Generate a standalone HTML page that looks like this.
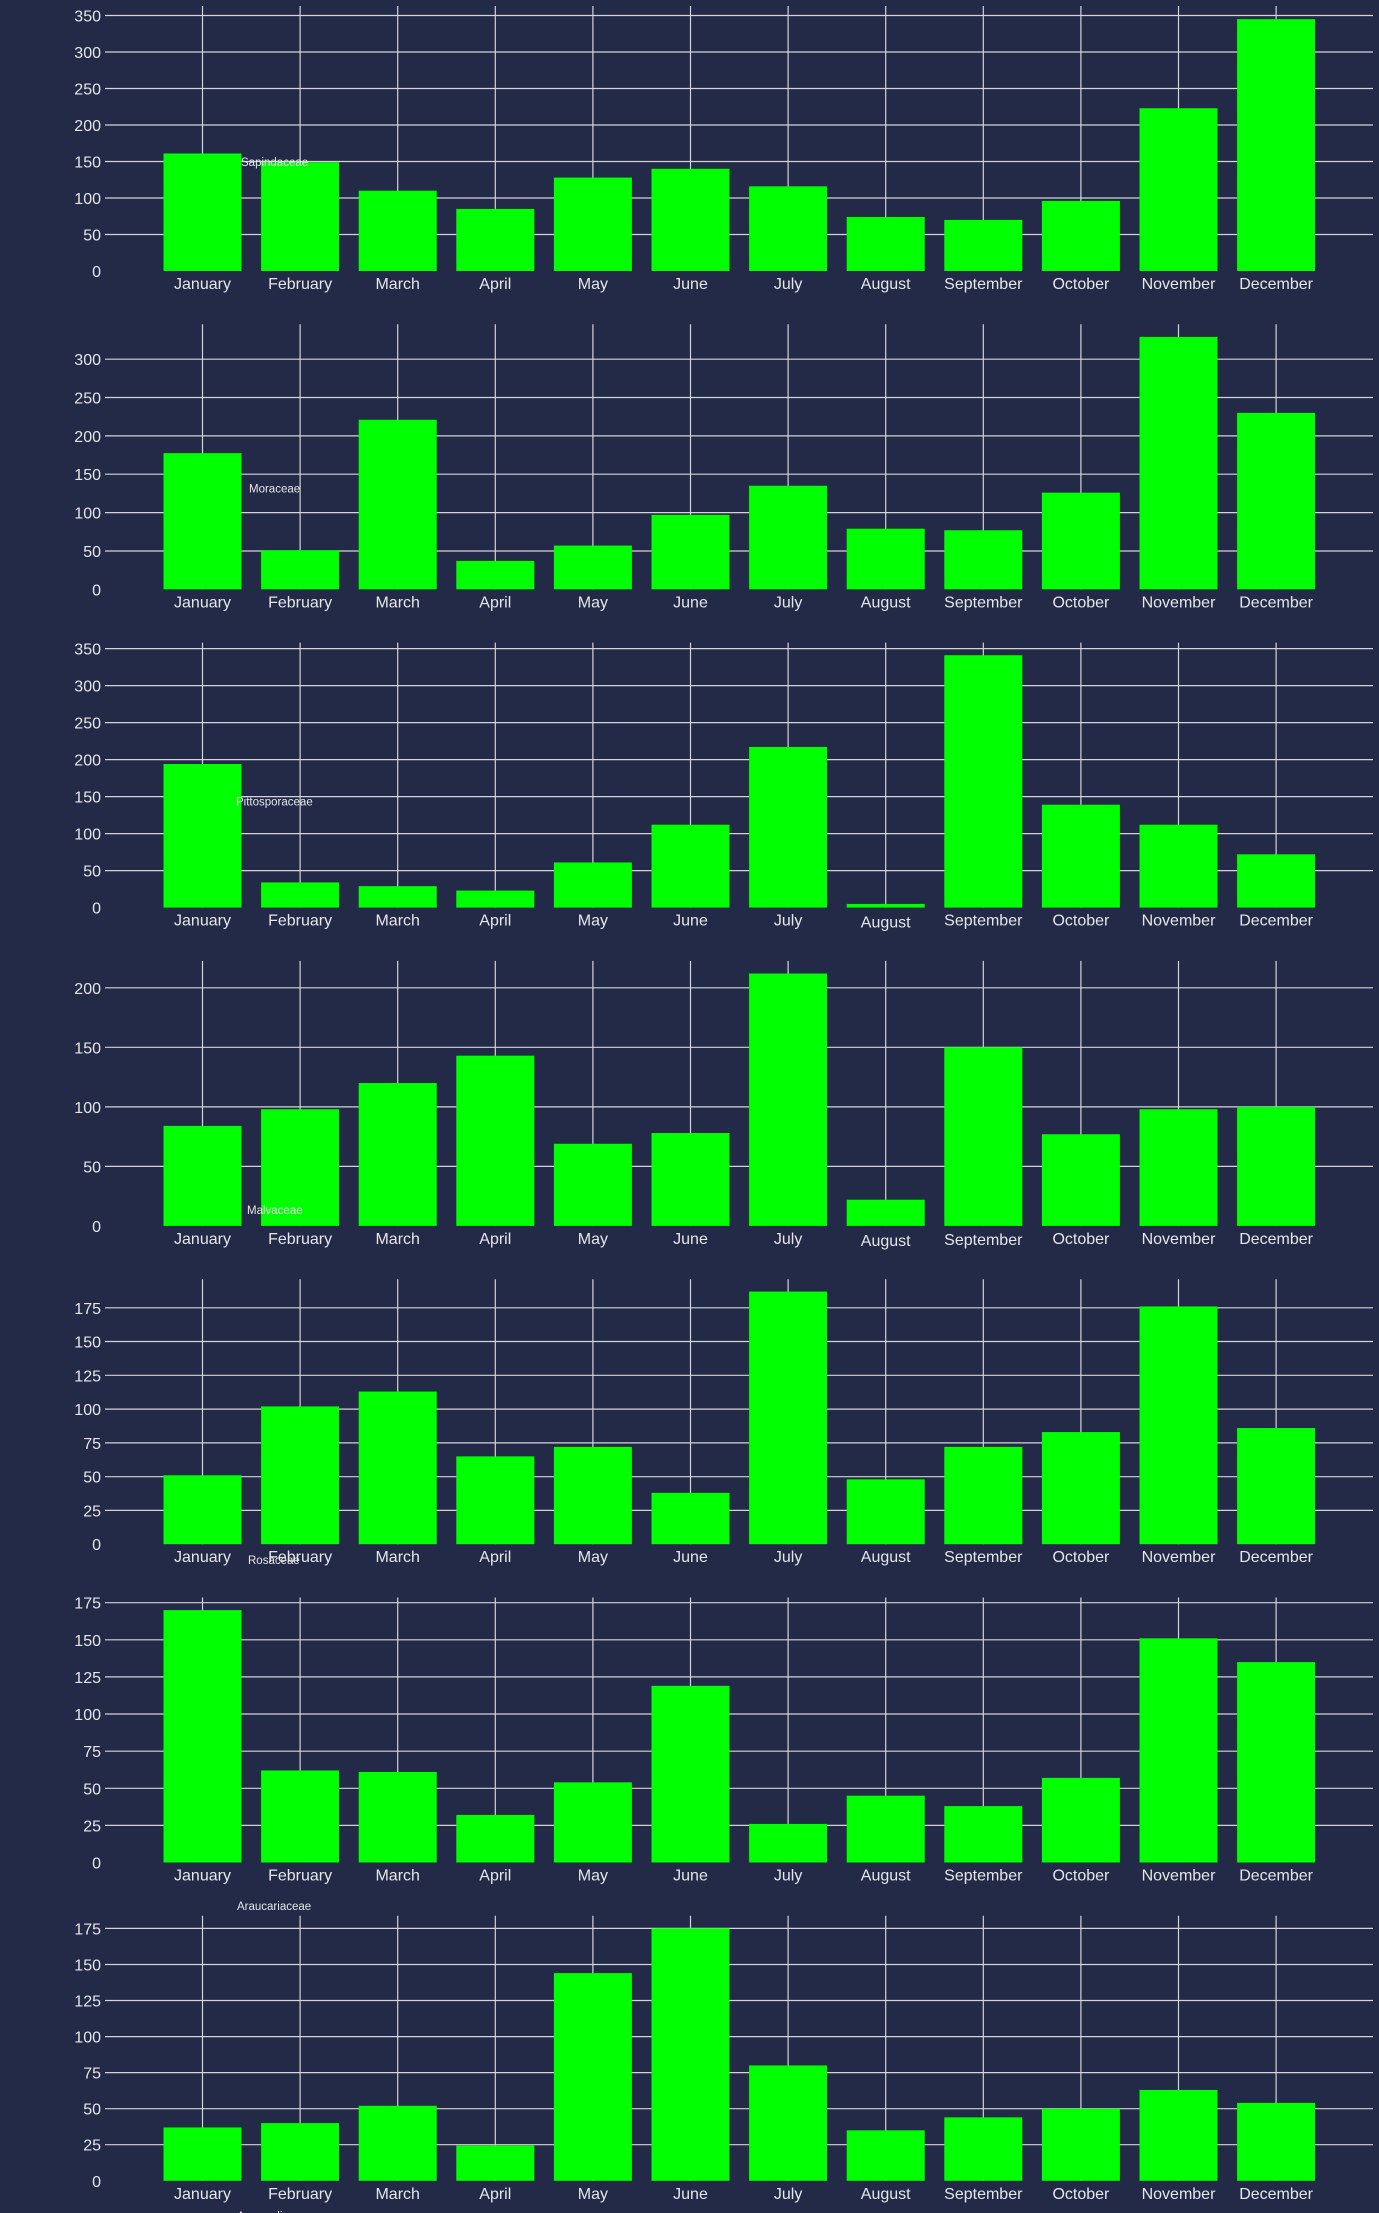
<!DOCTYPE html>
<html><head><meta charset="utf-8"><style>
html,body{margin:0;padding:0;background:#222a48;}
svg{display:block}
text{font-family:"Liberation Sans",sans-serif;fill:#e6e6e6}
.t{font-size:16px;text-anchor:end}
.m{font-size:16px;text-anchor:middle}
.l{font-size:11.5px}
.g line{stroke:#d4d4d4;stroke-width:1.2}
rect{fill:#00ff00}
</style></head><body>
<svg width="1379" height="2213" viewBox="0 0 1379 2213">
<rect x="0" y="0" width="1379" height="2213" style="fill:#222a48"/>
<defs>
<g id="vg" class="g">
<line x1="202.5" y1="6" x2="202.5" y2="271"/><line x1="300.1" y1="6" x2="300.1" y2="271"/><line x1="397.7" y1="6" x2="397.7" y2="271"/><line x1="495.3" y1="6" x2="495.3" y2="271"/><line x1="592.9" y1="6" x2="592.9" y2="271"/><line x1="690.5" y1="6" x2="690.5" y2="271"/><line x1="788.1" y1="6" x2="788.1" y2="271"/><line x1="885.7" y1="6" x2="885.7" y2="271"/><line x1="983.3" y1="6" x2="983.3" y2="271"/><line x1="1080.9" y1="6" x2="1080.9" y2="271"/><line x1="1178.5" y1="6" x2="1178.5" y2="271"/><line x1="1276.1" y1="6" x2="1276.1" y2="271"/>
</g>
</defs>

<!-- Chart 1 -->
<g>
<use href="#vg"/>
<g class="g"><line x1="105" x2="1373" y1="234.5" y2="234.5"/><line x1="105" x2="1373" y1="198" y2="198"/><line x1="105" x2="1373" y1="161.5" y2="161.5"/><line x1="105" x2="1373" y1="125" y2="125"/><line x1="105" x2="1373" y1="88.5" y2="88.5"/><line x1="105" x2="1373" y1="52" y2="52"/><line x1="105" x2="1373" y1="15.5" y2="15.5"/></g>
<g transform="translate(0,271) scale(1,-0.730)"><rect x="163.5" y="0" width="78" height="161"/><rect x="261.1" y="0" width="78" height="149"/><rect x="358.7" y="0" width="78" height="110"/><rect x="456.3" y="0" width="78" height="85"/><rect x="553.9" y="0" width="78" height="128"/><rect x="651.5" y="0" width="78" height="140"/><rect x="749.1" y="0" width="78" height="116"/><rect x="846.7" y="0" width="78" height="74"/><rect x="944.3" y="0" width="78" height="70"/><rect x="1041.9" y="0" width="78" height="96"/><rect x="1139.5" y="0" width="78" height="223"/><rect x="1237.1" y="0" width="78" height="345"/></g>
<text class="t" x="101" y="277">0</text><text class="t" x="101" y="240.5">50</text><text class="t" x="101" y="204">100</text><text class="t" x="101" y="167.5">150</text><text class="t" x="101" y="131">200</text><text class="t" x="101" y="94.5">250</text><text class="t" x="101" y="58">300</text><text class="t" x="101" y="21.5">350</text>
<text class="l" x="241" y="166">Sapindaceae</text>
</g>

<!-- Chart 2 -->
<g transform="translate(0,318.3)">
<use href="#vg"/>
<g class="g"><line x1="105" x2="1373" y1="232.7" y2="232.7"/><line x1="105" x2="1373" y1="194.3" y2="194.3"/><line x1="105" x2="1373" y1="155.9" y2="155.9"/><line x1="105" x2="1373" y1="117.6" y2="117.6"/><line x1="105" x2="1373" y1="79.2" y2="79.2"/><line x1="105" x2="1373" y1="40.9" y2="40.9"/></g>
<g transform="translate(0,271) scale(1,-0.7671)"><rect x="163.5" y="0" width="78" height="177.5"/><rect x="261.1" y="0" width="78" height="51"/><rect x="358.7" y="0" width="78" height="221"/><rect x="456.3" y="0" width="78" height="37"/><rect x="553.9" y="0" width="78" height="57"/><rect x="651.5" y="0" width="78" height="97"/><rect x="749.1" y="0" width="78" height="135"/><rect x="846.7" y="0" width="78" height="79"/><rect x="944.3" y="0" width="78" height="77"/><rect x="1041.9" y="0" width="78" height="126"/><rect x="1139.5" y="0" width="78" height="329"/><rect x="1237.1" y="0" width="78" height="230"/></g>
<text class="t" x="101" y="277">0</text><text class="t" x="101" y="238.7">50</text><text class="t" x="101" y="200.3">100</text><text class="t" x="101" y="161.9">150</text><text class="t" x="101" y="123.6">200</text><text class="t" x="101" y="85.2">250</text><text class="t" x="101" y="46.9">300</text>
<text class="l" x="249" y="174">Moraceae</text>
</g>

<!-- Chart 3 -->
<g transform="translate(0,636.6)">
<use href="#vg"/>
<g class="g"><line x1="105" x2="1373" y1="234" y2="234"/><line x1="105" x2="1373" y1="197" y2="197"/><line x1="105" x2="1373" y1="160" y2="160"/><line x1="105" x2="1373" y1="123" y2="123"/><line x1="105" x2="1373" y1="86" y2="86"/><line x1="105" x2="1373" y1="49" y2="49"/><line x1="105" x2="1373" y1="12" y2="12"/></g>
<g transform="translate(0,271) scale(1,-0.7401)"><rect x="163.5" y="0" width="78" height="194"/><rect x="261.1" y="0" width="78" height="34"/><rect x="358.7" y="0" width="78" height="29"/><rect x="456.3" y="0" width="78" height="23"/><rect x="553.9" y="0" width="78" height="61"/><rect x="651.5" y="0" width="78" height="112"/><rect x="749.1" y="0" width="78" height="217"/><rect x="846.7" y="0" width="78" height="5"/><rect x="944.3" y="0" width="78" height="341"/><rect x="1041.9" y="0" width="78" height="139"/><rect x="1139.5" y="0" width="78" height="112"/><rect x="1237.1" y="0" width="78" height="72"/></g>
<text class="t" x="101" y="277">0</text><text class="t" x="101" y="240">50</text><text class="t" x="101" y="203">100</text><text class="t" x="101" y="166">150</text><text class="t" x="101" y="129">200</text><text class="t" x="101" y="92">250</text><text class="t" x="101" y="55">300</text><text class="t" x="101" y="18">350</text>
<text class="l" x="236" y="169">Pittosporaceae</text>
</g>

<!-- Chart 4 -->
<g transform="translate(0,954.9)">
<use href="#vg"/>
<g class="g"><line x1="105" x2="1373" y1="211.5" y2="211.5"/><line x1="105" x2="1373" y1="152" y2="152"/><line x1="105" x2="1373" y1="92.4" y2="92.4"/><line x1="105" x2="1373" y1="32.9" y2="32.9"/></g>
<g transform="translate(0,271) scale(1,-1.1905)"><rect x="163.5" y="0" width="78" height="84"/><rect x="261.1" y="0" width="78" height="98"/><rect x="358.7" y="0" width="78" height="120"/><rect x="456.3" y="0" width="78" height="143"/><rect x="553.9" y="0" width="78" height="69"/><rect x="651.5" y="0" width="78" height="78"/><rect x="749.1" y="0" width="78" height="212"/><rect x="846.7" y="0" width="78" height="22"/><rect x="944.3" y="0" width="78" height="150"/><rect x="1041.9" y="0" width="78" height="77"/><rect x="1139.5" y="0" width="78" height="98"/><rect x="1237.1" y="0" width="78" height="100"/></g>
<text class="t" x="101" y="277">0</text><text class="t" x="101" y="217.5">50</text><text class="t" x="101" y="158">100</text><text class="t" x="101" y="98.4">150</text><text class="t" x="101" y="38.9">200</text>
<text class="l" x="247" y="259">Malvaceae</text>
</g>

<!-- Chart 5 -->
<g transform="translate(0,1273.2)">
<use href="#vg"/>
<g class="g"><line x1="105" x2="1373" y1="237.2" y2="237.2"/><line x1="105" x2="1373" y1="203.5" y2="203.5"/><line x1="105" x2="1373" y1="169.7" y2="169.7"/><line x1="105" x2="1373" y1="135.9" y2="135.9"/><line x1="105" x2="1373" y1="102.1" y2="102.1"/><line x1="105" x2="1373" y1="68.3" y2="68.3"/><line x1="105" x2="1373" y1="34.6" y2="34.6"/></g>
<g transform="translate(0,271) scale(1,-1.351)"><rect x="163.5" y="0" width="78" height="51"/><rect x="261.1" y="0" width="78" height="102"/><rect x="358.7" y="0" width="78" height="113"/><rect x="456.3" y="0" width="78" height="65"/><rect x="553.9" y="0" width="78" height="72"/><rect x="651.5" y="0" width="78" height="38"/><rect x="749.1" y="0" width="78" height="187"/><rect x="846.7" y="0" width="78" height="48"/><rect x="944.3" y="0" width="78" height="72"/><rect x="1041.9" y="0" width="78" height="83"/><rect x="1139.5" y="0" width="78" height="176"/><rect x="1237.1" y="0" width="78" height="86"/></g>
<text class="t" x="101" y="277">0</text><text class="t" x="101" y="243.2">25</text><text class="t" x="101" y="209.5">50</text><text class="t" x="101" y="175.7">75</text><text class="t" x="101" y="141.9">100</text><text class="t" x="101" y="108.1">125</text><text class="t" x="101" y="74.3">150</text><text class="t" x="101" y="40.6">175</text>
<text class="l" x="248" y="291">Rosaceae</text>
</g>

<!-- Chart 6 -->
<g transform="translate(0,1591.5)">
<use href="#vg"/>
<g class="g"><line x1="105" x2="1373" y1="233.9" y2="233.9"/><line x1="105" x2="1373" y1="196.8" y2="196.8"/><line x1="105" x2="1373" y1="159.7" y2="159.7"/><line x1="105" x2="1373" y1="122.5" y2="122.5"/><line x1="105" x2="1373" y1="85.4" y2="85.4"/><line x1="105" x2="1373" y1="48.3" y2="48.3"/><line x1="105" x2="1373" y1="11.2" y2="11.2"/></g>
<g transform="translate(0,271) scale(1,-1.4846)"><rect x="163.5" y="0" width="78" height="170"/><rect x="261.1" y="0" width="78" height="62"/><rect x="358.7" y="0" width="78" height="61"/><rect x="456.3" y="0" width="78" height="32"/><rect x="553.9" y="0" width="78" height="54"/><rect x="651.5" y="0" width="78" height="119"/><rect x="749.1" y="0" width="78" height="26"/><rect x="846.7" y="0" width="78" height="45"/><rect x="944.3" y="0" width="78" height="38"/><rect x="1041.9" y="0" width="78" height="57"/><rect x="1139.5" y="0" width="78" height="151"/><rect x="1237.1" y="0" width="78" height="135"/></g>
<text class="t" x="101" y="277">0</text><text class="t" x="101" y="239.9">25</text><text class="t" x="101" y="202.8">50</text><text class="t" x="101" y="165.7">75</text><text class="t" x="101" y="128.5">100</text><text class="t" x="101" y="91.4">125</text><text class="t" x="101" y="54.3">150</text><text class="t" x="101" y="17.2">175</text>
</g>
<text class="l" x="237" y="1910">Araucariaceae</text>

<!-- Chart 7 -->
<g transform="translate(0,1909.8)">
<use href="#vg"/>
<g class="g"><line x1="105" x2="1373" y1="234.9" y2="234.9"/><line x1="105" x2="1373" y1="198.9" y2="198.9"/><line x1="105" x2="1373" y1="162.8" y2="162.8"/><line x1="105" x2="1373" y1="126.8" y2="126.8"/><line x1="105" x2="1373" y1="90.7" y2="90.7"/><line x1="105" x2="1373" y1="54.7" y2="54.7"/><line x1="105" x2="1373" y1="18.6" y2="18.6"/></g>
<g transform="translate(0,271) scale(1,-1.4422)"><rect x="163.5" y="0" width="78" height="37"/><rect x="261.1" y="0" width="78" height="40"/><rect x="358.7" y="0" width="78" height="52"/><rect x="456.3" y="0" width="78" height="24.5"/><rect x="553.9" y="0" width="78" height="144"/><rect x="651.5" y="0" width="78" height="175"/><rect x="749.1" y="0" width="78" height="80"/><rect x="846.7" y="0" width="78" height="35"/><rect x="944.3" y="0" width="78" height="44"/><rect x="1041.9" y="0" width="78" height="50"/><rect x="1139.5" y="0" width="78" height="63"/><rect x="1237.1" y="0" width="78" height="54"/></g>
<text class="t" x="101" y="277">0</text><text class="t" x="101" y="240.9">25</text><text class="t" x="101" y="204.9">50</text><text class="t" x="101" y="168.8">75</text><text class="t" x="101" y="132.8">100</text><text class="t" x="101" y="96.7">125</text><text class="t" x="101" y="60.7">150</text><text class="t" x="101" y="24.6">175</text>
</g>
<text class="l" x="237" y="2220">Anacardiaceae</text>

<!-- month labels -->
<g>
<text class="m" x="202.5" y="289">January</text><text class="m" x="300.1" y="289">February</text><text class="m" x="397.7" y="289">March</text><text class="m" x="495.3" y="289">April</text><text class="m" x="592.9" y="289">May</text><text class="m" x="690.5" y="289">June</text><text class="m" x="788.1" y="289">July</text><text class="m" x="885.7" y="289">August</text><text class="m" x="983.3" y="289">September</text><text class="m" x="1080.9" y="289">October</text><text class="m" x="1178.5" y="289">November</text><text class="m" x="1276.1" y="289">December</text>
</g>
<g transform="translate(0,318.3)">
<text class="m" x="202.5" y="289">January</text><text class="m" x="300.1" y="289">February</text><text class="m" x="397.7" y="289">March</text><text class="m" x="495.3" y="289">April</text><text class="m" x="592.9" y="289">May</text><text class="m" x="690.5" y="289">June</text><text class="m" x="788.1" y="289">July</text><text class="m" x="885.7" y="289">August</text><text class="m" x="983.3" y="289">September</text><text class="m" x="1080.9" y="289">October</text><text class="m" x="1178.5" y="289">November</text><text class="m" x="1276.1" y="289">December</text>
</g>
<g transform="translate(0,636.6)">
<text class="m" x="202.5" y="289">January</text><text class="m" x="300.1" y="289">February</text><text class="m" x="397.7" y="289">March</text><text class="m" x="495.3" y="289">April</text><text class="m" x="592.9" y="289">May</text><text class="m" x="690.5" y="289">June</text><text class="m" x="788.1" y="289">July</text><text class="m" x="885.7" y="291">August</text><text class="m" x="983.3" y="289">September</text><text class="m" x="1080.9" y="289">October</text><text class="m" x="1178.5" y="289">November</text><text class="m" x="1276.1" y="289">December</text>
</g>
<g transform="translate(0,954.9)">
<text class="m" x="202.5" y="289">January</text><text class="m" x="300.1" y="289">February</text><text class="m" x="397.7" y="289">March</text><text class="m" x="495.3" y="289">April</text><text class="m" x="592.9" y="289">May</text><text class="m" x="690.5" y="289">June</text><text class="m" x="788.1" y="289">July</text><text class="m" x="885.7" y="291">August</text><text class="m" x="983.3" y="290">September</text><text class="m" x="1080.9" y="289">October</text><text class="m" x="1178.5" y="289">November</text><text class="m" x="1276.1" y="289">December</text>
</g>
<g transform="translate(0,1273.2)">
<text class="m" x="202.5" y="289">January</text><text class="m" x="300.1" y="289">February</text><text class="m" x="397.7" y="289">March</text><text class="m" x="495.3" y="289">April</text><text class="m" x="592.9" y="289">May</text><text class="m" x="690.5" y="289">June</text><text class="m" x="788.1" y="289">July</text><text class="m" x="885.7" y="289">August</text><text class="m" x="983.3" y="289">September</text><text class="m" x="1080.9" y="289">October</text><text class="m" x="1178.5" y="289">November</text><text class="m" x="1276.1" y="289">December</text>
</g>
<g transform="translate(0,1591.5)">
<text class="m" x="202.5" y="289">January</text><text class="m" x="300.1" y="289">February</text><text class="m" x="397.7" y="289">March</text><text class="m" x="495.3" y="289">April</text><text class="m" x="592.9" y="289">May</text><text class="m" x="690.5" y="289">June</text><text class="m" x="788.1" y="289">July</text><text class="m" x="885.7" y="289">August</text><text class="m" x="983.3" y="289">September</text><text class="m" x="1080.9" y="289">October</text><text class="m" x="1178.5" y="289">November</text><text class="m" x="1276.1" y="289">December</text>
</g>
<g transform="translate(0,1909.8)">
<text class="m" x="202.5" y="289">January</text><text class="m" x="300.1" y="289">February</text><text class="m" x="397.7" y="289">March</text><text class="m" x="495.3" y="289">April</text><text class="m" x="592.9" y="289">May</text><text class="m" x="690.5" y="289">June</text><text class="m" x="788.1" y="289">July</text><text class="m" x="885.7" y="289">August</text><text class="m" x="983.3" y="289">September</text><text class="m" x="1080.9" y="289">October</text><text class="m" x="1178.5" y="289">November</text><text class="m" x="1276.1" y="289">December</text>
</g>
</svg>
</body></html>
